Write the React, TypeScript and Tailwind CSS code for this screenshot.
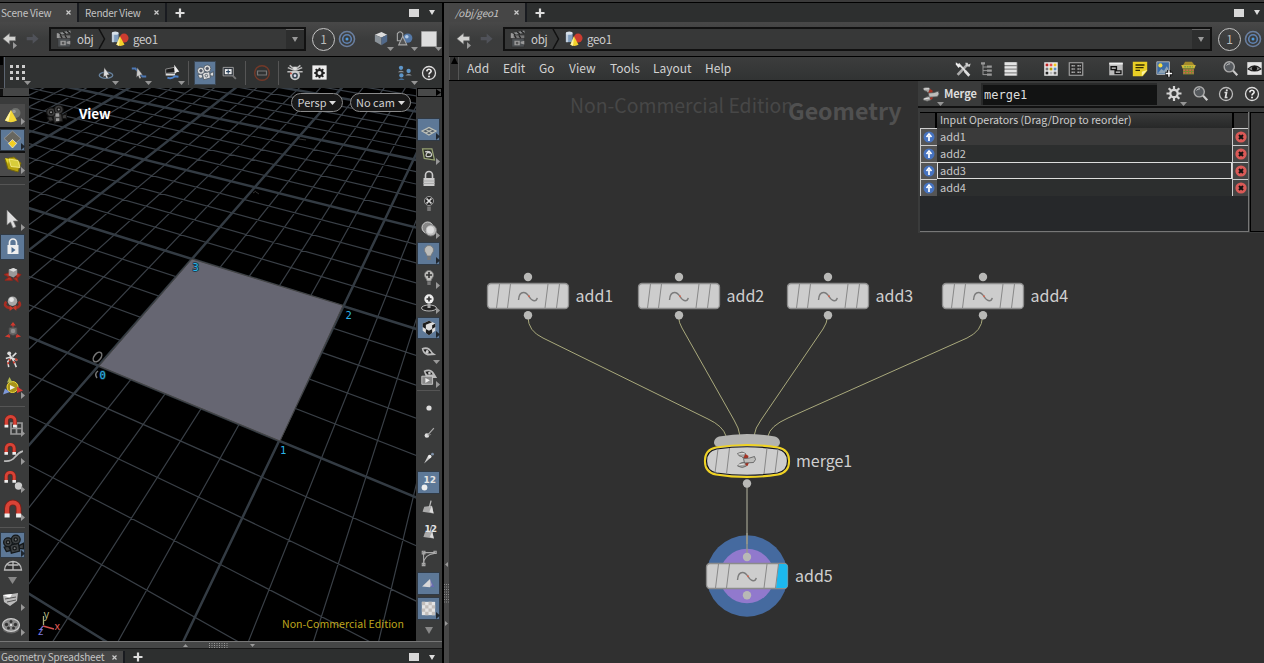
import React from 'react';

const UI = "font-['Noto_Sans_CJK_SC','Noto_Sans',sans-serif]";

/* ---------- perspective floor grid ---------- */

// Known floor points: [u, v, screen x, screen y], one unit = one major cell.
const ANCHORS = [
  [0, 0, 99, 366], [1, 0, 280, 441], [1, 1, 343, 305.5], [0, 1, 192, 259],
  [0, 2, 255.7, 186.7], [0, 3, 299.7, 135.7], [1, 2, 384.7, 220], [-1, 1, 67.3, 220],
  [-1, 2, 143.7, 159.7], [1, -0.8, 194.7, 616.7], [1.4, -0.2, 353, 518.3],
  [1.4, -0.6, 320.7, 616.7], [0.6, -1, 67.3, 617.7], [1.4, 0, 366.3, 476.7],
];

function solveProjection(): number[] {
  const m = Array.from({ length: 8 }, () => new Array(9).fill(0));
  for (const [u, v, x, y] of ANCHORS) {
    const rows = [
      [u, v, 1, 0, 0, 0, -u * x, -v * x, x],
      [0, 0, 0, u, v, 1, -u * y, -v * y, y],
    ];
    for (const r of rows)
      for (let i = 0; i < 8; i++) for (let j = 0; j < 9; j++) m[i][j] += r[i] * r[j];
  }
  for (let c = 0; c < 8; c++) {
    let p = c;
    for (let r = c + 1; r < 8; r++) if (Math.abs(m[r][c]) > Math.abs(m[p][c])) p = r;
    [m[c], m[p]] = [m[p], m[c]];
    for (let r = 0; r < 8; r++) {
      if (r === c) continue;
      const f = m[r][c] / m[c][c];
      for (let j = c; j < 9; j++) m[r][j] -= f * m[c][j];
    }
  }
  return m.map((r, i) => r[8] / r[i]);
}

const H = solveProjection();
const depth = (u: number, v: number) => H[6] * u + H[7] * v + 1;
const project = (u: number, v: number) => {
  const w = depth(u, v);
  return [(H[0] * u + H[1] * v + H[2]) / w, (H[3] * u + H[4] * v + H[5]) / w];
};

function gridLine(a: number[], b: number[]): string {
  const NEAR = 0.25;
  let p = a, q = b;
  const wp = depth(a[0], a[1]), wq = depth(b[0], b[1]);
  if (wp < NEAR && wq < NEAR) return '';
  const t = (NEAR - wp) / (wq - wp);
  const cut = [a[0] + (b[0] - a[0]) * t, a[1] + (b[1] - a[1]) * t];
  if (wp < NEAR) p = cut;
  if (wq < NEAR) q = cut;
  const [x1, y1] = project(p[0], p[1]);
  const [x2, y2] = project(q[0], q[1]);
  return `M${x1.toFixed(1)} ${y1.toFixed(1)}L${x2.toFixed(1)} ${y2.toFixed(1)}`;
}

let MINOR = '';
let MAJOR = '';
for (let i = -30; i <= 30; i++) {
  const s = gridLine([i / 5, -4], [i / 5, 6]) + gridLine([-6, i / 5], [6, i / 5]);
  if (i % 5 === 0) MAJOR += s;
  else MINOR += s;
}

/* ---------- icons ---------- */

type IconProps = { name: string; size?: string };

const magnet = (
  <>
    <path d="M4 13V8a5 5 0 0 1 10 0v5" fill="none" stroke="#7a1f18" strokeWidth="5" />
    <path d="M4 13V8a5 5 0 0 1 10 0v5" fill="none" stroke="#d84336" strokeWidth="3.6" />
    <path d="M1.800 12.500h4.400v3.500H1.800zM11.800 12.500h4.400v3.500h-4.400z" fill="#eee" />
  </>
);
const bulb = (
  <>
    <path d="M10 2.500a4.500 4.500 0 0 0-4.500 4.500c0 2.500 2.200 3.500 2.500 6h4c.3-2.500 2.500-3.500 2.500-6A4.500 4.500 0 0 0 10 2.500z" fill="#bdbdba" stroke="#777" strokeWidth=".8" />
    <path d="M8.300 13.500h3.400v3.500H8.300z" fill="#777" />
  </>
);
const camera = (
  <>
    <path d="M2 12l4-1 2 4-4 1zM15.500 10.500l4-2v5l-4-.5z" />
    <path d="M7 10l8-1.500 1 7-7.500 2z" />
    <circle cx="5.500" cy="7.500" r="4" />
    <circle cx="12.500" cy="5" r="4" />
  </>
);

const ICONS: Record<string, React.ReactNode> = {
  dots: <path d="M2 2h3v3H2zM8 2h3v3H8zM14 2h3v3h-3zM2 8h3v3H2zM8 8h3v3H8zM14 8h3v3h-3zM2 14h3v3H2zM8 14h3v3H8zM14 14h3v3h-3z" fill="#ccc" />,
  orbit: (
    <>
      <ellipse cx="10" cy="12.500" rx="7.500" ry="3.500" fill="none" stroke="#66809c" strokeWidth="1.500" />
      <path d="M8 4l6 8-3 .3 1.500 3.200-2 .8L9 13l-2 2z" fill="#ddd" stroke="#333" strokeWidth=".5" />
    </>
  ),
  snapline: (
    <>
      <path d="M2 5h4l8 9h4" stroke="#4d78b5" strokeWidth="2.200" fill="none" />
      <path d="M8 4l6 8-3 .3 1.500 3.200-2 .8L9 13l-2 2z" fill="#ccc" stroke="#333" strokeWidth=".5" />
    </>
  ),
  brush: (
    <>
      <path d="M2 6l10-2 2 6-12 1z" fill="#1c1c1c" stroke="#999" />
      <path d="M2 12.500h11" stroke="#ddd" strokeWidth="2.200" />
      <path d="M4 16q5 2 9-1.500l4 .5" fill="none" stroke="#4f83c9" strokeWidth="2.300" />
      <path d="M12 1l6 8-3 .3-2.500 2.500z" fill="#eee" />
    </>
  ),
  movie: <g fill="#dcdcdc" stroke="#4a5560" strokeWidth=".9">{camera}<circle cx="5.500" cy="7.500" r="1.400" fill="#556" /><circle cx="12.500" cy="5" r="1.400" fill="#556" /><circle cx="11.500" cy="13" r="1.500" /></g>,
  movieDark: <g fill="#3e4244" stroke="#14181a" strokeWidth="1.200">{camera}<circle cx="5.500" cy="7.500" r="1.500" fill="#777" /><circle cx="12.500" cy="5" r="1.500" fill="#777" /><circle cx="11.500" cy="13" r="1.500" fill="#777" /></g>,
  movieGrey: <g fill="#3c3c3c" stroke="#151515" strokeWidth="1">{camera}<circle cx="5.500" cy="7.500" r="1.500" fill="#888" /><circle cx="12.500" cy="5" r="1.500" fill="#888" /><path d="M9.500 8.500h3.500v3H9.500zM10 13h3v2.500h-3z" fill="#999" stroke="none" /></g>,
  zoomview: (
    <>
      <path d="M2.500 4h12v10h-12z" fill="#2c333b" stroke="#a5a5a5" />
      <path d="M4.500 6h8v6h-8z" fill="#eee" /><path d="M8.500 6.500v5M6 9h5" stroke="#27425e" strokeWidth="1.300" />
      <path d="M14 14l3.500 3.500" stroke="#777" strokeWidth="2" />
    </>
  ),
  stop: (
    <>
      <circle cx="10" cy="10" r="7.300" fill="none" stroke="#743928" strokeWidth="1.400" />
      <path d="M5.500 8h9v4h-9z" fill="none" stroke="#777" strokeWidth="1.200" />
    </>
  ),
  spider: (
    <>
      <path d="M2 4l6 2.500M4 1.500l5 4M18 4l-6 2.500M16 1.500l-5 4M1.500 8.500h6M18.500 8.500h-6" stroke="#bbb" strokeWidth="1.700" />
      <path d="M8 3h4v4H8z" fill="#ddd" />
      <circle cx="10" cy="12.500" r="5.500" fill="#ccc" /><circle cx="10" cy="13" r="3.200" fill="#394650" /><circle cx="10" cy="13" r="1.500" fill="#dde" /><circle cx="5.500" cy="10.500" r="1" fill="#c43" />
    </>
  ),
  gearbox: (
    <>
      <path d="M2.500 2.500h15v15h-15z" fill="#eee" />
      <circle cx="10" cy="10.500" r="3.200" fill="none" stroke="#222" strokeWidth="2.200" />
      <path d="M10 5v2M10 14v2M4.500 10.500h2M13.500 10.500h2M6 6.500l1.500 1.500M14 6.500L12.500 8M6 14.500L7.500 13M14 14.500L12.500 13" stroke="#222" strokeWidth="1.900" />
    </>
  ),
  people: (
    <>
      <circle cx="5" cy="3.500" r="2.700" fill="#5e96c9" /><path d="M1 9q4-3.500 8 0z" fill="#8a9096" />
      <circle cx="14.500" cy="7.500" r="2.700" fill="#5e96c9" /><path d="M10.500 13q4-3.500 8 0z" fill="#8a9096" />
      <circle cx="5.500" cy="13" r="2.700" fill="#5e96c9" /><path d="M1.500 18.500q4-3.500 8 0z" fill="#4d83b8" />
    </>
  ),
  help: (
    <>
      <circle cx="10" cy="10" r="6.500" fill="#333" stroke="#ddd" strokeWidth="1.300" />
      <path d="M7.800 8.300q.2-2 2.200-2t2.200 1.800q0 1-1.200 1.700-1 .6-1 1.600" fill="none" stroke="#eee" strokeWidth="1.600" />
      <circle cx="10" cy="13.500" r="1" fill="#eee" />
    </>
  ),
  info: (
    <>
      <circle cx="10" cy="10" r="6.500" fill="#333" stroke="#bbb" strokeWidth="1.300" />
      <path d="M8.500 8.500h2L9.500 13.500h2" fill="none" stroke="#ddd" strokeWidth="1.700" />
      <circle cx="10.800" cy="6.300" r="1.100" fill="#ddd" />
    </>
  ),
  clap: (
    <>
      <path d="M3 9h14v10H3z" fill="#4c5053" stroke="#333" />
      <path d="M2 3.500l15-3 .5 2.500-15 3z" fill="#8b8d8e" /><path d="M4 3l3 2.500M9 2l3 2.500M13.500 1l3 2.500" stroke="#222" strokeWidth="1.500" />
      <path d="M4 6h13v3H4z" fill="#777" /><path d="M6 6l2 3M11 6l2 3" stroke="#222" strokeWidth="1.300" />
      <path d="M2 4h3v5H2z" fill="#999" />
      <path d="M6 12h6v5H6zM13 13l4-1v4l-4-1z" fill="#999" /><circle cx="9" cy="14.500" r="1.500" fill="#555" />
    </>
  ),
  geo: (
    <>
      <path d="M1 3.500v10h7.500v-10z" fill="#7f9dbe" /><path d="M1 3.500v10h2.500v-10z" fill="#c0cedd" /><ellipse cx="4.700" cy="3.500" rx="3.700" ry="1.700" fill="#d6e0ea" />
      <circle cx="14.500" cy="9" r="5" fill="#cb3c30" />
      <path d="M10 7L6 16.500q4.500 2.500 9 0z" fill="#f3d22c" /><path d="M10 7L6 16.500l3 1.200z" fill="#fff3a0" />
    </>
  ),
  back: <path d="M1 9l8-6.500v4h7v5H9v4z" fill="#d2d2d0" stroke="#666" strokeWidth=".7" />,
  fwd: <path d="M16 9L9 3v4H2v4h7v4z" fill="#505259" />,
  target: (
    <g fill="none" stroke="#5f83b4" strokeWidth="1.600">
      <circle cx="10" cy="10" r="7.500" stroke="#6a7fa0" /><circle cx="10" cy="10" r="4.300" /><circle cx="10" cy="10" r="1.500" fill="#4d9be0" stroke="none" />
    </g>
  ),
  cube: (
    <>
      <path d="M3 5l7-3 6 3-6 3z" fill="#ddd" /><path d="M3 5l7 3v8l-7-4z" fill="#8a9299" /><path d="M16 5l-6 3v8l6-4z" fill="#51698a" />
    </>
  ),
  shapes: (
    <>
      <path d="M1.500 4q3-4 6 0v8h-6z" fill="#3d3f40" stroke="#aaa" strokeWidth="1.200" />
      <circle cx="13" cy="9" r="5.200" fill="#5579a8" /><circle cx="12" cy="7.500" r="2" fill="#b4cbe6" />
      <path d="M7.500 7L3 16.500h9z" fill="#555" stroke="#aaa" strokeWidth="1.200" />
    </>
  ),
  square: <path d="M2.500 2.500h15v15h-15z" fill="#ddd" stroke="#aaa" strokeWidth=".6" />,
  cone: (
    <>
      <circle cx="12.500" cy="7" r="5" fill="#6f716e" /><circle cx="11" cy="5.500" r="1.800" fill="#999" />
      <path d="M8 4L2 14.500q5.500 3.500 12 0z" fill="#f2d638" /><path d="M8 4L5.500 15.500l-3.500-1z" fill="#fff39a" />
    </>
  ),
  tile: (
    <>
      <path d="M9.500 1l8.500 7.500-8.500 7.500L1 8.500z" fill="#67665f" stroke="#999" strokeWidth=".8" />
      <path d="M9.500 9.500l4.200 4-4.200 4.500-4.200-4.500z" fill="#f3cf24" stroke="#eee" strokeWidth=".7" />
    </>
  ),
  ybox: (
    <>
      <path d="M2 4l9-2 7 6-3 9-10-3z" fill="#b7a30d" stroke="#77690a" /><path d="M6 4l9 1.500 2 7-9-1z" fill="#d8cd3a" stroke="#fff6a0" strokeWidth=".7" /><path d="M2 3l4 1-1 5z" fill="#e5d92f" />
    </>
  ),
  pointer: <path d="M4 1v15l3.500-3 2.500 6 3-1.300-2.600-5.700h4.600z" fill="#ddd" stroke="#777" strokeWidth=".7" />,
  lockSel: (
    <>
      <path d="M6.500 8V5.500a3.500 3.500 0 0 1 7 0V8" fill="none" stroke="#eee" strokeWidth="1.700" />
      <path d="M4.500 8h11v9h-11z" fill="#eee" /><path d="M8.500 10l4 3-4 3z" fill="#4a6a8e" />
    </>
  ),
  move: (
    <>
      <path d="M1 9l6-2v5zM19 9l-7-2 3 6zM2 15l5-4 3 4zM16 17l-5-4 4-1z" fill="#b53124" stroke="#8f261c" strokeWidth="1" />
      <path d="M6 4l5-2 4 2v5l-4 3-5-2z" fill="#999" /><path d="M6 4l5-2 4 2-4 2z" fill="#ddd" />
    </>
  ),
  rotate: (
    <>
      <path d="M3.500 8q-4 5 4 7M16.500 8q4 5-4 7" fill="none" stroke="#a52d22" strokeWidth="2.800" /><path d="M7 12v6l4-3zM14 11.500v6l-4-3z" fill="#c83a2b" />
      <circle cx="10" cy="7.500" r="5" fill="#a8a8a8" /><circle cx="9" cy="6" r="2.500" fill="#e6e6e6" />
    </>
  ),
  scale: (
    <>
      <path d="M10 0l3 4H7zM1 16l5-3 1 4.500zM19 16l-5-3-1 4.500z" fill="#d43c2e" /><path d="M10 3v5M5 15l4-3M15 15l-4-3" stroke="#b33" strokeWidth="2" />
      <path d="M5.500 6.500l4.500-1 4.500 1v7L10 15l-4.500-1.500z" fill="#666" stroke="#444" /><circle cx="10" cy="10" r="2.500" fill="#8d8d8d" />
    </>
  ),
  pose: (
    <>
      <circle cx="6.500" cy="3.500" r="2" fill="#ddd" />
      <path d="M7 5l2 3-4 4 1 6M9 8l6 3M9 8l3 5 2 5M9 7L3 9M14 3l-4 4" fill="none" stroke="#ddd" strokeWidth="1.600" />
      <path d="M6.500 9.500l1 2M13 9l2 2M11 12l1 2M5.500 13v2" stroke="#cc3a2b" strokeWidth="2" />
    </>
  ),
  handles: (
    <>
      <circle cx="9.500" cy="10" r="5.500" fill="#a8931a" stroke="#f3dc3a" /><path d="M6.500 0l3 5.500-5.500 0z" fill="#b3b84f" /><path d="M20 13.500l-6-4v6.500z" fill="#d63b35" /><path d="M0 17.500l2-6 5 3.500z" fill="#7d98d8" />
      <path d="M7 8l5 2.500-5 2.500z" fill="#eee" />
    </>
  ),
  magGrid: <><path d="M8 8h11v11H8zM13.500 8v11M8 13.500h11" fill="none" stroke="#999" strokeWidth="1.700" /><g transform="translate(0 -1) scale(.85)">{magnet}</g></>,
  magCurve: <><path d="M1 18q7 1 11-4t8-6" fill="none" stroke="#bbb" strokeWidth="1.700" /><g transform="translate(0 -1) scale(.8)">{magnet}</g></>,
  magPoint: <><circle cx="15.500" cy="15" r="3.700" fill="#ccc" /><g transform="translate(0 -1) scale(.8)">{magnet}</g></>,
  magMulti: <g transform="translate(-.5 0) scale(1.15)">{magnet}</g>,
  arc: <path d="M1.500 14a8.500 8.500 0 0 1 17 0zM10 5v9M4.500 9h11" fill="#303030" stroke="#bbb" strokeWidth="1.300" />,
  sheets: <><path d="M2 5l9-1 6-1-1 8-7 5-6-4z" fill="#bbb" /><path d="M2 5l9-1-2 4z" fill="#fff" /><path d="M4 9l11-2M6 12l9-2" stroke="#555" /></>,
  reel: (
    <>
      <path d="M1.500 10q8 9 17 0l-1 5q-7 5-15 0z" fill="#666" /><ellipse cx="10" cy="9" rx="8.500" ry="6.300" fill="#888" stroke="#ccc" strokeWidth="1.200" />
      <circle cx="5.500" cy="8.500" r="1.700" fill="#333" /><circle cx="10" cy="5.500" r="1.500" fill="#333" /><circle cx="14.500" cy="8.500" r="1.700" fill="#333" /><circle cx="7.500" cy="12" r="1.500" fill="#333" /><circle cx="12.500" cy="12" r="1.500" fill="#333" /><circle cx="10" cy="9" r="1.100" fill="#eee" />
    </>
  ),
  plane: <path d="M3 12l7-3.500 7 3.500-7 4zM6.500 10.300l7 4M13.500 10.300l-7 4" fill="#55606a" stroke="#bdc0b8" strokeWidth="1.200" />,
  wplane: <><path d="M3 3.500l11 0 3 13-12-2z" fill="#2e3128" stroke="#96a273" strokeWidth="1.500" /><path d="M6 7q5-2 7 1.500t-2.500 4-3-3 4-1" fill="none" stroke="#ccc" strokeWidth="1.500" /></>,
  padlock: <><path d="M6.500 9V6a3.500 3.500 0 0 1 7 0v3" fill="none" stroke="#ccc" strokeWidth="1.600" /><path d="M4.500 9h11v8h-11z" fill="#ccc" /><path d="M4.500 12h11M4.500 14.500h11" stroke="#aaa" /></>,
  bulbX: <><circle cx="10" cy="7" r="4.500" fill="#222" stroke="#999" /><path d="M7.500 4.500l5 5M12.500 4.500l-5 5" stroke="#ddd" strokeWidth="1.700" /><path d="M8.200 12.500h3.600V17H8.200z" fill="#777" /></>,
  spheres: <><circle cx="8.500" cy="8.500" r="6.300" fill="#888" stroke="#ddd" /><circle cx="12" cy="11.500" r="6.300" fill="#bbb" stroke="#777" /><circle cx="11.500" cy="11" r="4" fill="#ddd" /></>,
  bulb,
  bulbPlus: <>{bulb}<path d="M10 4v6M7 7h6" stroke="#333" strokeWidth="1.600" /></>,
  bulbDisk: <><ellipse cx="10" cy="15" rx="7.500" ry="3" fill="#222" stroke="#bbb" /><circle cx="10" cy="6" r="4.700" fill="#eee" /><path d="M10 3.500v5M7.500 6h5" stroke="#333" strokeWidth="1.600" /><path d="M8.500 10.500h3V15h-3z" fill="#aaa" /></>,
  checker: (
    <>
      <path d="M3 5l7-3 7 3v8l-7 5-7-5z" fill="#ddd" /><path d="M3 5l3.500-1.500L10 5 6.500 6.500zM10 2l3.500 1.500L10 5 6.500 3.500zM3 9l3.500 2V6.500L3 5zM6.500 11l3.500 2v5l-3.500-2.500zM13.500 7L17 5v4l-3.500 2zM10 13l3.500-2v4.500L10 18z" fill="#1c1c1c" />
    </>
  ),
  eye: <><path d="M2 5q8-4 13 5l4 3-10 .5Q3 12 2 5z" fill="#bbb" /><path d="M4 6.500q6-2 9.500 4.500-7 1-9.500-4.500z" fill="#1c1c1c" /><circle cx="8.500" cy="9" r="1.800" fill="#ccc" /></>,
  eyeBox: <><path d="M4 2q8-4 12 3l3 5H7z" fill="#bbb" /><path d="M6 3q6-2 8 3H8z" fill="#222" /><circle cx="10.500" cy="4.500" r="1.500" fill="#ccc" /><path d="M2 8h12v9H2z" fill="#888" stroke="#ccc" /><path d="M6 10l5 2.500-5 3z" fill="#eee" /></>,
  point: <circle cx="10" cy="10" r="2.600" fill="#ddd" />,
  normal: <><path d="M8 13l9-10" stroke="#aaa" strokeWidth="1.700" /><circle cx="7" cy="13.500" r="3.300" fill="#ddd" /><path d="M8 13l5-1" stroke="#777" strokeWidth="1.500" /></>,
  trail: <><path d="M3 18l5-10 3.500 2.500z" fill="#ccc" /><circle cx="11" cy="8" r="2.600" fill="#eee" /><circle cx="15" cy="4.500" r="2" fill="#7d8fa6" /></>,
  prim: <><path d="M5 9l9-1 2 9-13-2z" fill="#aaa" /><path d="M14 8l2 9-5-2z" fill="#ddd" /><path d="M11 10l2-8" stroke="#bbb" strokeWidth="1.500" /></>,
  vcurve: <path d="M4 18V4h13M4 16Q5 6 16 5M2.500 2.500h3v3h-3zM15.500 2.500h2.500v2.500h-2.500zM2.500 16h3v2.500h-3z" fill="none" stroke="#aaa" strokeWidth="1.200" />,
  fan: <><path d="M1.500 14L12 4v11z" fill="#d8d8d8" /><path d="M12 4l6 11-6-1z" fill="#6a6ab5" /><path d="M12 4v11l2.500-3z" fill="#aab" /></>,
  alpha: <><path d="M3 3h14v14H3z" fill="#e4e4e4" /><path d="M3 3h3.500v3.500H3zM10 3h3.500v3.500H10zM6.500 6.500H10V10H6.500zM13.500 6.500H17V10h-3.500zM3 10h3.500v3.500H3zM10 10h3.500v3.500H10zM6.500 13.500H10V17H6.500zM13.500 13.500H17V17h-3.500z" fill="#c2bebb" /></>,
  tools: (
    <>
      <path d="M4 16.500L14 6" stroke="#aaa" strokeWidth="3" /><path d="M12.500 3l1 4 4 .5 1-3.500-2.500 1-1-2z" fill="#ccc" />
      <path d="M5 4l11 12" stroke="#ddd" strokeWidth="2.200" /><path d="M2 2.500l5.500 4-2.500 2.500-3-4z" fill="#eee" /><path d="M12 12l5 5.500" stroke="#ddd" strokeWidth="3" />
    </>
  ),
  tree: <><path d="M5 3v14.500M5 7.500h5M5 12h5M5 17h5" stroke="#999" strokeWidth="1.200" fill="none" /><path d="M2.500 1.500h5v3h-5zM10 5.500h6v3h-6zM10 10.500h6v3h-6zM10 15.500h6v3h-6z" fill="#999" /></>,
  list: <><path d="M2 1.500h16v17H2z" fill="#888" /><path d="M2 1.500h15v3.500H2zM2 6.500h15v3H2zM2 11h15v3H2zM2 15.500h15v2.500H2z" fill="#e4e4e4" /></>,
  colors: (
    <>
      <path d="M2.500 2.500h15v15h-15z" fill="#eee" />
      <path d="M4 4h3v3H4z" fill="#bd2121" /><path d="M8.500 4h3v3h-3z" fill="#e8504e" /><path d="M13 4h3v3h-3z" fill="#f4c620" />
      <path d="M4 8.500h3v3H4z" fill="#777" /><path d="M8.500 8.500h3v3h-3z" fill="#b89c00" /><path d="M13 8.500h3v3h-3z" fill="#5d8dc4" />
      <path d="M4 13h3v3H4z" fill="#222" /><path d="M8.500 13h3v3h-3z" fill="#bbb" /><path d="M13 13h3v3h-3z" fill="#666" />
    </>
  ),
  table: <><path d="M2.500 3h15v14h-15z" fill="#2a2a2a" stroke="#aaa" strokeWidth="1.200" /><path d="M5 6.500h4M11.500 6.500h4M5 10h4M11.500 10h4M5 13.500h4M11.500 13.500h4" stroke="#aaa" strokeWidth="1.700" strokeDasharray="2.500 .5" /></>,
  boxes: <><path d="M2.500 3h15v14h-15z" fill="#bbb" /><path d="M2.500 3h15v2h-15z" fill="#eee" /><path d="M4.500 7.500h6v3h-6zM9 12h6.500v3H9z" fill="#ddd" stroke="#111" strokeWidth="1.500" /></>,
  note: <><path d="M2 2h16v10l-5 6H2z" fill="#e9cf25" /><path d="M18 11l-6 7v-5z" fill="#fff4a0" /><path d="M5 5.500h10M5 8.500h9M5 11.500h5" stroke="#332d00" strokeWidth="1.500" /></>,
  picture: (
    <>
      <path d="M2 2h14v14H2z" fill="#3c6ca6" stroke="#bbb" /><circle cx="6" cy="6" r="2.300" fill="#f6dc45" /><path d="M3 15l4-5 3 2 3-5 2 3v5z" fill="#8fa3b2" />
      <path d="M15.500 11v8M11.500 15h8" stroke="#111" strokeWidth="4" /><path d="M15.500 11.500v7M12 15h7" stroke="#fff" strokeWidth="1.600" />
    </>
  ),
  basket: <><path d="M3 7l3-5h8l4 5z" fill="#a38a2a" /><path d="M1.500 6h17l-1.500 4H3z" fill="#cdb73a" /><path d="M3.500 10h13v7h-13z" fill="#7c8a34" /><path d="M4 12h12M4 15h12" stroke="#d8604a" strokeWidth="1.600" strokeDasharray="2 1.500" /><path d="M5 8h10" stroke="#79a344" strokeWidth="1.700" strokeDasharray="2 1" /></>,
  search: <><circle cx="8.500" cy="8" r="6" fill="#55595d" stroke="#aaa" strokeWidth="1.700" /><path d="M5.500 6.500q1.500-2.500 4-2" stroke="#ddd" fill="none" /><path d="M13 12.500l5 5.500" stroke="#ccc" strokeWidth="2.600" /></>,
  eyeCard: <><path d="M1.500 2.500h17v15h-17z" fill="#e4e4e4" /><path d="M2.500 10.500q7.500-7 15 0-7.500 5-15 0z" fill="#888" stroke="#222" strokeWidth="1.300" /><circle cx="10" cy="10" r="3" fill="#111" /></>,
  gear: <g stroke="#d4d4d4" fill="none"><circle cx="10" cy="9.500" r="3.700" strokeWidth="2.300" /><path d="M10 2v3.500M10 13.500V17M2.500 9.500H6M14 9.500h3.500M4.700 4.200l2.300 2.300M15.300 4.200L13 6.500M4.700 14.800L7 12.500M15.300 14.800L13 12.500" strokeWidth="2.200" /></g>,
  merge: (
    <>
      <path d="M1 4q5-3 8 0l-1 4q-2 1-3-1Q2 7 1 4zM1 16.500q2-4 8-4l1 4q-4 3-9 0z" fill="#a3a3a1" stroke="#555" strokeWidth=".7" />
      <path d="M9 4.500l3 2-1 3.500-4-1.500zM9 15.500l0-3.500 3.500 1-1.500 3.500z" fill="#a83223" />
      <path d="M7 9l6-.5 5-1.500 1 3-2 3-9 .5z" fill="#bdbdbb" stroke="#555" strokeWidth=".8" /><path d="M2 4.500l6-.3M2 15.500l6-1" stroke="#e4e4e4" strokeWidth="1.200" />
    </>
  ),
};

function Icon({ name, size = 'size-5' }: IconProps) {
  return <svg viewBox="0 0 20 20" className={`${size} shrink-0`}>{ICONS[name]}</svg>;
}

/* ---------- shared bits ---------- */

function Tool({ name, className = '', menu = false, size }: { name: string; className?: string; menu?: boolean; size?: string }) {
  return (
    <div className={`relative flex h-6 w-6 shrink-0 items-center justify-center ${className}`}>
      <Icon name={name} size={size} />
      {menu && <svg viewBox="0 0 7 4" className="absolute -right-px bottom-0 h-[4px] w-[7px]"><path d="M0 0h7L3.500 4z" fill="#959595" /></svg>}
    </div>
  );
}

function SideTool({ name, fly = false, down = false, on = false, className = 'h-7', size = 'size-5', label }: { name?: string; fly?: boolean; down?: boolean; on?: boolean; className?: string; size?: string; label?: string }) {
  return (
    <div className={`relative flex w-full items-center justify-center ${className}`}>
      <div className={`relative flex items-center justify-center ${on ? 'h-[calc(100%-2px)] w-full border border-[#303a45] bg-[#5d7897]' : 'h-full w-full'}`}>
        {name && <Icon name={name} size={size} />}
        {label && <span className="absolute top-[3px] right-[3px] font-['DejaVu_Sans',sans-serif] text-[9px] leading-[10px] font-bold text-[#e4e4e4]">{label}</span>}
      </div>
      {fly && <svg viewBox="0 0 4 7" className="absolute right-0 bottom-[2px] h-[7px] w-[4px]"><path d="M0 0v7l4-3.500z" fill={on ? '#1f262e' : '#999'} /></svg>}
      {down && <svg viewBox="0 0 7 4" className="absolute right-0 bottom-[1px] h-[4px] w-[7px]"><path d="M0 0h7L3.500 4z" fill="#999" /></svg>}
    </div>
  );
}

function Tab({ text, active = false, className }: { text: string; active?: boolean; className: string }) {
  return (
    <div className={`flex h-full items-center justify-between border-r-2 border-[#191b20] pr-[6px] pl-[1px] text-[10px] leading-[14px] tracking-[-0.2px] text-[#c4c4c4] ${active ? 'bg-[#464646]' : 'bg-[#313333]'} ${className}`}>
      <span className="whitespace-nowrap">{text}</span>
      <svg viewBox="0 0 5 5" className="size-[5px]"><path d="M.5.5l4 4M4.500.5l-4 4" stroke="#ccc" strokeWidth="1.200" /></svg>
    </div>
  );
}

function Plus({ className = '' }: { className?: string }) {
  return <svg viewBox="0 0 10 10" className={`size-[10px] ${className}`}><path d="M5 .5v9M.5 5h9" stroke="#ddd" strokeWidth="2.200" /></svg>;
}

function PaneButtons({ className = 'pr-[7px]' }: { className?: string }) {
  return (
    <div className={`ml-auto flex items-center gap-[10px] ${className}`}>
      <div className="h-2 w-[10px] bg-[#d8d8d8]" />
      <svg viewBox="0 0 6 5" className="h-[5px] w-[6px]"><path d="M0 0h6L3 5z" fill="#ddd" /></svg>
    </div>
  );
}

function PathRow({ boxClass, pad, children }: { boxClass: string; pad: string; children?: React.ReactNode }) {
  return (
    <div className={`flex h-[34px] items-center bg-gradient-to-b from-[#484848] via-[#3b3c3c] to-[#3c3c3c] ${pad}`}>
      <div className="relative flex h-6 w-[22px] items-center">
        <Icon name="back" size="size-[17px]" />
        <svg viewBox="0 0 4 7" className="absolute top-[15px] left-[11px] h-[7px] w-[4px]"><path d="M0 0v7l4-3.500z" fill="#999" /></svg>
      </div>
      <div className="flex h-6 w-[25px] items-center pl-[1px]"><Icon name="fwd" size="size-[17px]" /></div>
      <div className={`flex h-6 items-center border-2 border-[#111] bg-[#373838] text-[11.500px] leading-[16px] tracking-[-0.3px] text-[#cfcfcf] ${boxClass}`}>
        <div className="flex h-full items-center pl-1"><Icon name="clap" size="size-[18px]" /><span className="-mt-px ml-[4px] w-[21px]">obj</span></div>
        <svg viewBox="0 0 8 20" className="h-5 w-2"><path d="M1 0l5.500 10L1 20" fill="none" stroke="#111" strokeWidth="1.500" /></svg>
        <div className="flex items-center pl-[5px]"><Icon name="geo" size="size-[18px]" /><span className="-mt-px ml-[4px]">geo1</span></div>
        <div className="ml-auto flex h-full w-[18px] items-center justify-center border-t border-[#666] bg-[#2d2e2e]">
          <svg viewBox="0 0 6 5" className="h-[5px] w-[6px]"><path d="M0 0h6L3 5z" fill="#999" /></svg>
        </div>
      </div>
      <div className="ml-[6px] flex size-[23px] items-center justify-center rounded-full border-[1.500px] border-[#c4c4c4] pb-px text-[12px] leading-none text-[#bbb]">1</div>
      <div className="ml-[2px]"><Icon name="target" size="size-[20px]" /></div>
      {children}
    </div>
  );
}

/* ---------- scene view ---------- */

function Pill({ text, className }: { text: string; className: string }) {
  return (
    <div className={`flex h-[19px] items-center justify-center gap-[3px] rounded-full border border-[#8a8a8a] bg-[#191919] pb-[2px] text-[11px] leading-[14px] text-[#d0d0d0] ${className}`}>
      {text}
      <svg viewBox="0 0 7 4" className="mt-[3px] h-[4px] w-[7px]"><path d="M0 0h7L3.500 4z" fill="#ddd" /></svg>
    </div>
  );
}

function Viewport() {
  return (
    <div className="relative h-full w-[387px] overflow-hidden bg-black">
      <svg viewBox="29 88 387 553" className="block h-[553px] w-[387px]">
        <path d={MINOR} stroke="#393f46" strokeWidth="1.200" />
        <path d={MAJOR} stroke="#333b43" strokeWidth="2.500" />
        <path d="M99 366L280 441 343 305.500 192 259z" fill="#666672" stroke="#444" strokeWidth="1" />
        <path d="M253 193l3-2M256 192l3 2M299 139l7 1" stroke="#333" />
        <ellipse cx="97.500" cy="357" rx="3.300" ry="5.500" transform="rotate(38 97.500 357)" fill="none" stroke="#777" strokeWidth="1.500" />
        <path d="M98 371q-4 3-1 7" stroke="#777" fill="none" strokeWidth="1.500" />
        <g className="font-['DejaVu_Sans_Mono',monospace] text-[10.500px]" fill="#2bb4e8" stroke="#12313f" strokeWidth="1.500" paintOrder="stroke">
          <text x="99.500" y="379">0</text>
          <text x="192.500" y="271">3</text>
          <text x="345.500" y="319" stroke="none">2</text>
          <text x="280" y="454" stroke="none">1</text>
        </g>
        <path d="M43.500 616v9" stroke="#a9ad78" strokeWidth="1.300" />
        <path d="M43 626l11 3" stroke="#d4504c" strokeWidth="1.300" />
        <path d="M43 626l-3 4" stroke="#6868c8" strokeWidth="1.300" />
        <g className="font-['Noto_Sans_CJK_SC',sans-serif] text-[11px]">
          <text x="43.500" y="618" fill="#b2b784">y</text>
          <text x="54.500" y="630" fill="#e05b55">x</text>
          <text x="38" y="635" fill="#7a7ae0">z</text>
        </g>
      </svg>
      <div className="absolute top-[16px] left-[16px]"><Icon name="movieGrey" size="size-[22px]" /></div>
      <div className="absolute top-[16px] left-[50px] text-[13.500px] leading-[18px] font-bold tracking-[-0.1px] text-white">View</div>
      <div className="absolute top-[5px] left-[262px] flex gap-[7px]">
        <Pill text="Persp" className="w-[52px]" />
        <Pill text="No cam" className="w-[61px]" />
      </div>
      <div className="absolute bottom-[10px] left-[253px] text-[10.600px] leading-[14px] whitespace-nowrap text-[#bfa51c]">Non-Commercial Edition</div>
    </div>
  );
}

const VSep = ({ className }: { className: string }) => <div className={`h-6 w-px bg-[#555] ${className}`} />;
const HSep = () => <div className="h-px w-full shrink-0 bg-[#555]" />;
const Spacer = ({ className }: { className: string }) => <div className={`flex w-full shrink-0 items-center ${className}`}><HSep /></div>;

function LeftBar() {
  return (
    <div className="flex h-full w-[29px] flex-col bg-[#3a3b3b] pr-[4px]">
      <div className="flex h-[9px] w-[29px] items-center border-b border-black bg-[#454646]"><div className="h-[7px] w-[3px] bg-[#111]" /></div>
      <div className="mt-[7px] flex flex-col gap-px bg-[#111] pb-px">
        <SideTool name="cone" fly className="h-[23px] bg-[#4a4a4a]" />
        <SideTool name="tile" fly on className="h-[24px]" />
        <SideTool name="ybox" fly className="h-[23px] bg-[#4a4a4a]" />
      </div>
      <Spacer className="h-[14px]" />
      <div className="h-[14px] shrink-0" />
      <SideTool name="pointer" fly />
      <SideTool name="lockSel" on />
      <SideTool name="move" size="size-[19px]" />
      <SideTool name="rotate" size="size-[19px]" />
      <SideTool name="scale" size="size-[18px]" />
      <SideTool name="pose" size="size-[19px]" />
      <SideTool name="handles" fly />
      <Spacer className="h-[10px]" />
      <SideTool name="magGrid" fly />
      <SideTool name="magCurve" fly />
      <SideTool name="magPoint" fly />
      <SideTool name="magMulti" fly />
      <Spacer className="h-[8px]" />
      <SideTool name="movieDark" fly on size="size-[22px]" />
      <SideTool name="arc" className="h-[16px] overflow-hidden pb-[2px]" />
      <div className="flex h-[11px] shrink-0 items-center justify-center"><svg viewBox="0 0 9 7" className="h-[7px] w-[9px]"><path d="M0 0h9L4.500 7z" fill="#888" /></svg></div>
      <SideTool name="sheets" fly className="h-[27px] pr-[4px]" />
      <SideTool name="reel" fly className="h-[25px] pr-[3px]" />
    </div>
  );
}

function RightBar() {
  return (
    <div className="flex h-full w-[26px] flex-col bg-[#3a3b3b] pr-[2px] pl-[1px]">
      <div className="flex h-[9px] w-[25px] shrink-0 items-center justify-end border border-black bg-[#484949]"><svg viewBox="0 0 5 7" className="h-[7px] w-[5px]"><path d="M0 0v7l5-3.500z" fill="#000" /></svg></div>
      <div className="mt-[20px] flex h-[273px] shrink-0 flex-col">
        <SideTool name="plane" fly on className="min-h-0 flex-1" />
        <SideTool name="wplane" fly className="min-h-0 flex-1" size="size-[17px]" />
        <SideTool name="padlock" className="min-h-0 flex-1" />
        <SideTool name="bulbX" className="min-h-0 flex-1" />
        <SideTool name="spheres" fly className="min-h-0 flex-1" size="size-[18px]" />
        <SideTool name="bulb" fly on className="min-h-0 flex-1" />
        <SideTool name="bulbPlus" fly className="min-h-0 flex-1" />
        <SideTool name="bulbDisk" fly className="min-h-0 flex-1" />
        <SideTool name="checker" fly on className="min-h-0 flex-1" size="size-[18px]" />
        <SideTool name="eye" down className="min-h-0 flex-1" size="size-[17px]" />
        <SideTool name="eyeBox" fly className="min-h-0 flex-1" size="size-[18px]" />
      </div>
      <HSep />
      <div className="mt-[4px] flex h-[226px] shrink-0 flex-col">
        <SideTool name="point" className="min-h-0 flex-1" />
        <SideTool name="normal" className="min-h-0 flex-1" size="size-[14px]" />
        <SideTool name="trail" className="min-h-0 flex-1" size="size-[14px]" />
        <div className="relative flex min-h-0 w-full flex-1 items-center justify-center">
          <SideTool on className="h-full" label="12" />
          <svg viewBox="0 0 8 8" className="absolute bottom-[4px] left-[4px] size-[7px]"><circle cx="4" cy="4" r="3.300" fill="#eee" /></svg>
        </div>
        <SideTool name="prim" className="min-h-0 flex-1" size="size-[17px]" />
        <SideTool name="prim" className="min-h-0 flex-1" size="size-[16px]" label="12" />
        <SideTool name="vcurve" className="min-h-0 flex-1" size="size-[18px]" />
        <SideTool name="fan" on className="min-h-0 flex-1" size="size-[15px]" />
        <SideTool name="alpha" fly on className="min-h-0 flex-1" size="size-[19px]" />
      </div>
      <div className="flex h-[19px] items-center justify-center"><svg viewBox="0 0 8 7" className="h-[7px] w-[8px]"><path d="M0 0h8L4 7z" fill="#888" /></svg></div>
    </div>
  );
}

function SceneView() {
  return (
    <div className="flex h-full w-[442px] flex-col">
      <div className="flex h-[19px] bg-[#2d2f2f]">
        <Tab text="Scene View" active className="w-[79px]" />
        <Tab text="Render View" className="w-[88px] pl-[6px]" />
        <div className="flex items-center"><Plus className="ml-[8px]" /></div>
        <PaneButtons />
      </div>
      <PathRow boxClass="w-[257px]" pad="pl-[2px]">
        <Tool name="cube" menu className="ml-[12px]" size="size-[19px]" />
        <Tool name="shapes" menu className="" size="size-[18px]" />
        <Tool name="square" menu className="" size="size-[20px]" />
      </PathRow>
      <div className="flex h-[32px] items-center border-t border-black bg-[#303232]">
        <div className="h-full w-[5px] border-r border-[#5c6470] bg-[#222]"><div className="h-2 w-[3px] bg-black" /></div>
        <Tool name="dots" menu className="ml-[1px]" />
        <Tool name="orbit" menu className="ml-[64px]" size="size-[18px]" />
        <Tool name="snapline" menu className="ml-[9px]" size="size-[18px]" />
        <Tool name="brush" menu className="ml-[9px]" size="size-[17px]" />
        <VSep className="ml-[4px]" />
        <div className="ml-[5px] flex h-6 w-[22px] items-center justify-center border border-[#3a4653] bg-[#5d7897]"><Icon name="movie" size="size-[18px]" /></div>
        <Tool name="zoomview" className="ml-[1px]" size="size-[17px]" />
        <VSep className="ml-[4px]" />
        <Tool name="stop" className="ml-[4px]" />
        <VSep className="ml-[4px]" />
        <Tool name="spider" className="ml-[4px]" size="size-[18px]" />
        <Tool name="gearbox" size="size-[19px]" />
        <Tool name="people" menu className="ml-[62px]" size="size-[16px]" />
        <Tool name="help" />
      </div>
      <div className="flex h-[553px]">
        <LeftBar />
        <Viewport />
        <RightBar />
      </div>
      <div className="flex h-[7px] items-center justify-center gap-[21px] border-t border-[#777] bg-[#454646] pr-[4px]">
        <svg viewBox="0 0 5 3" className="h-[3px] w-[5px]"><path d="M0 3h5L2.500 0z" fill="#999" /></svg>
        <svg viewBox="0 0 20 5" className="h-[5px] w-[20px]"><path d="M0 .5h20M0 2.500h20M0 4.500h20" stroke="#999" strokeDasharray="1 1.500" /></svg>
        <svg viewBox="0 0 5 3" className="h-[3px] w-[5px]"><path d="M0 0h5L2.500 3z" fill="#999" /></svg>
      </div>
      <div className="flex h-[15px] items-center border-t border-[#181818] bg-[#2d2f2f] pt-[2px]">
        <Tab text="Geometry Spreadsheet" active className="w-[125px]" />
        <Plus className="ml-[8px]" />
        <PaneButtons />
      </div>
    </div>
  );
}

/* ---------- network editor ---------- */

const squiggle = (
  <>
    <path d="M31.500 17Q32 9.500 36.500 9.500q3 0 5.500 4t5 4.300q2.500.3 3.300-3" fill="none" stroke="#7b7b7b" strokeWidth="1.400" />
    <circle cx="42" cy="13.300" r="1" fill="#d06a55" />
  </>
);

function AddNode({ place, label, display = false }: { place: string; label: string; display?: boolean }) {
  return (
    <div className={`absolute flex items-center ${place}`}>
      <svg viewBox="0 -16 82 58" className="h-[58px] w-[82px] overflow-visible">
        {display && <><circle cx="41" cy="13" r="40.700" fill="#456a9f" /><circle cx="41" cy="13" r="27.300" fill="#9179cd" /></>}
        {display && <path d="M41-30v24" stroke="#999989" strokeWidth="1.300" />}
        <rect x=".5" y=".5" width="81" height="25" rx="3.500" fill="#cdcdcd" stroke="#8b8b8b" strokeWidth="1.300" />
        {display && <path d="M72.500 1H79q2.500 0 2.500 3v18q0 3-2.500 3h-9z" fill="#1cb8ee" />}
        <path d="M12.500 1L9.500 25M23.500 1l-3 24M61 1l-3 24M72.500 1l-3 24" stroke="#888" strokeWidth="1" />
        {squiggle}
        <circle cx="41" cy="-6" r="4.200" fill="#b8b8b6" />
        <circle cx="41" cy="32.300" r="4.200" fill="#b8b8b6" />
      </svg>
      <span className="-mt-[2px] ml-[7px] text-[16px] leading-[20px] text-[#cfcfcf]">{label}</span>
    </div>
  );
}

function ListRow({ label, selected = false, shade }: { label: string; selected?: boolean; shade: string }) {
  return (
    <div className="flex h-[17px] text-[11px]">
      <div className="flex w-[17px] items-center justify-center border-t border-l border-[#ccc] bg-[#555]">
        <svg viewBox="0 0 12 12" className="size-[12px]"><circle cx="6" cy="6" r="5.500" fill="#4673c0" /><path d="M6 10V5M3.500 6L6 3l2.500 3" fill="none" stroke="#fff" strokeWidth="1.700" /></svg>
      </div>
      <div className={`flex flex-1 items-center pl-[2px] leading-none text-[#c8c8c8] ${selected ? 'border border-[#ddd]' : 'border border-transparent'} ${shade}`}>{label}</div>
      <div className="flex w-[16px] items-center justify-center border-t border-l border-[#ccc] bg-[#444]">
        <svg viewBox="0 0 12 12" className="size-[12px]"><circle cx="6" cy="6" r="5.600" fill="#da5a57" /><path d="M4 4l4 4M8 4L4 8" stroke="#111" strokeWidth="2" /></svg>
      </div>
    </div>
  );
}

function ParameterPanel() {
  return (
    <div className="absolute top-0 right-0 h-[152px] w-[346px] bg-[#3a3b3b]">
      <div className="flex h-[27px] items-center border-b-2 border-[#111]">
        <Tool name="merge" menu className="ml-[1px]" size="size-[18px]" />
        <span className="ml-px w-[37px] text-[11px] leading-none font-bold tracking-[-0.1px] whitespace-nowrap text-[#ddd]">Merge</span>
        <div className="flex h-[22px] w-[176px] items-center border-t-2 border-l-2 border-[#292a2a] bg-[#121313] pl-[1px] font-['DejaVu_Sans_Mono',monospace] text-[12px] leading-none text-[#ddd]">merge1</div>
        <Tool name="gear" menu className="ml-[5px]" />
        <Tool name="search" className="ml-[2px]" size="size-[17px]" />
        <Tool name="info" className="ml-[2px]" />
        <Tool name="help" className="ml-[2px]" />
      </div>
      <div className="flex h-[125px] pt-[4px] pl-[2px]">
        <div className="h-[120px] w-[329px] border-r border-b border-[#777] bg-[#26282a]">
          <div className="flex h-[16px] gap-[2px] border-t border-black bg-black text-[10.600px]">
            <div className="w-[15px] bg-[#333]" />
            <div className="flex-1 bg-gradient-to-b from-[#393a3a] to-[#272828] pl-[3px] leading-[13px] text-[#ccc]">Input Operators (Drag/Drop to reorder)</div>
            <div className="w-[14px] bg-[#333]" />
          </div>
          <ListRow label="add1" shade="bg-[#3a3a3a]" />
          <ListRow label="add2" shade="bg-[#2c2e2e]" />
          <ListRow label="add3" selected shade="bg-[#323335]" />
          <ListRow label="add4" shade="bg-[#2c2e2e]" />
        </div>
        <div className="ml-px h-[120px] w-[14px] border border-r-0 border-black bg-[#333]" />
      </div>
    </div>
  );
}

function NetworkCanvas() {
  return (
    <div className="relative h-[582px] overflow-hidden bg-[#303030]">
      <div className="absolute top-[12px] left-[121px] text-[19.400px] leading-[24px] whitespace-nowrap text-[#474747]">Non-Commercial Edition</div>
      <div className="absolute top-[13px] left-[339px] text-[23.200px] leading-[32px] font-bold text-[#505050]">Geometry</div>
      <svg viewBox="449 81 815 582" className="absolute inset-0 h-[582px] w-[815px]">
        <g fill="none" stroke="#a9a97c" strokeWidth="1">
          <path d="M528 317Q528 331 543 338L708 419Q723 426 726 436" />
          <path d="M678.500 317Q679 323 682 328L734 420Q739 428 740 436" />
          <path d="M827.500 317Q827 323 823 329L761 420Q755 428 754 436" />
          <path d="M982.500 317Q982 331 967 338L788 418Q770 426 768 436" />
        </g>
      </svg>
      <AddNode place="top-[186px] left-[37.500px]" label="add1" />
      <AddNode place="top-[186px] left-[188.500px]" label="add2" />
      <AddNode place="top-[186px] left-[337.500px]" label="add3" />
      <AddNode place="top-[186px] left-[492.500px]" label="add4" />
      <AddNode place="top-[466px] left-[257px]" label="add5" display />
      <svg viewBox="700 430 94 130" className="absolute top-[349px] left-[251px] h-[130px] w-[94px]">
        <path d="M747 484v60" stroke="#999989" strokeWidth="1.300" />
        <path d="M714 443q0-5 5-6.500 28-5 56 0 5 1.500 5 6.500-1 4-5 4h-56q-4 0-5-4z" fill="#b3b3b1" />
        <path d="M716 447.500q31-5 62 0 11 2 11 13.500t-11 13.500q-31 5-62 0-11-2-11-13.500t11-13.500z" fill="#cdcdcd" stroke="#f0d324" strokeWidth="2.200" />
        <path d="M716.500 449q30.500-4.500 61 0 10 2 10 12t-10 12q-30.500 4.500-61 0-10-2-10-12t10-12z" fill="none" stroke="#151515" strokeWidth="1.200" />
        <path d="M718 449l-3 24M729.500 448l-3 26M767 448l-3 26M778 449l-3 24" stroke="#888" />
        <g transform="translate(736.500 449.500)">{ICONS.merge}</g>
        <circle cx="747" cy="483.500" r="4.200" fill="#b8b8b6" />
      </svg>
      <div className="absolute top-[369px] left-[347px] text-[16px] leading-[20px] text-[#cfcfcf]">merge1</div>
      <ParameterPanel />
    </div>
  );
}

function NetworkEditor() {
  return (
    <div className="flex h-full w-[815px] flex-col">
      <div className="flex h-[19px] bg-[#2d2f2f]">
        <Tab text="/obj/geo1" active className="w-[78px] pl-[6px] italic" />
        <div className="flex items-center"><Plus className="ml-[8px]" /></div>
        <PaneButtons className="pr-[4px]" />
      </div>
      <PathRow boxClass="w-[709px]" pad="pl-[7px]" />
      <div className="flex h-[25px] items-center border-y border-black bg-gradient-to-b from-[#3c3d3d] to-[#313333] text-[12px] leading-none text-[#d2d2d2]">
        <div className="h-full w-[10px] border-x border-[#555] bg-[#333]"><svg viewBox="0 0 6 6" className="mx-auto size-[7px]"><path d="M0 6h6L3 0z" fill="#000" /></svg></div>
        <div className="flex pb-[2px]">
          <span className="ml-[8px] w-[36px]">Add</span>
          <span className="w-[36px]">Edit</span>
          <span className="w-[30px]">Go</span>
          <span className="w-[41px]">View</span>
          <span className="w-[43px]">Tools</span>
          <span className="w-[52px]">Layout</span>
          <span>Help</span>
        </div>
        <div className="ml-auto flex items-center">
          <Tool name="tools" size="size-[18px]" />
          <Tool name="tree" size="size-[16px]" />
          <Tool name="list" size="size-[16px]" />
          <Tool name="colors" className="ml-[16px]" size="size-[18px]" />
          <Tool name="table" className="ml-px" size="size-[18px]" />
          <Tool name="boxes" className="ml-[16px]" size="size-[18px]" />
          <Tool name="note" size="size-[18px]" />
          <Tool name="picture" size="size-[18px]" />
          <Tool name="basket" size="size-[17px]" />
          <Tool name="search" className="ml-[18px]" size="size-[17px]" />
          <Tool name="eyeCard" className="-mr-[2px]" size="size-[17px]" />
        </div>
      </div>
      <NetworkCanvas />
    </div>
  );
}

export default function App() {
  return (
    <div className={`h-[663px] w-[1264px] overflow-hidden bg-[#383838] ${UI}`}>
      <div className="h-[3px] border-b border-black bg-[#3b3b3b]" />
      <div className="flex h-[660px]">
        <SceneView />
        <div className="flex w-[7px] shrink-0 flex-col items-center justify-end gap-[17px] border-l-2 border-black bg-[#474747] pb-[37px]">
          <svg viewBox="0 0 3 5" className="h-[5px] w-[3px]"><path d="M3 0v5L0 2.500z" fill="#999" /></svg>
          <svg viewBox="0 0 5 20" className="h-[20px] w-[5px]"><path d="M.5 0v20M2.500 0v20M4.500 0v20" stroke="#888" strokeDasharray="1 1.500" /></svg>
          <svg viewBox="0 0 3 5" className="h-[5px] w-[3px]"><path d="M0 0v5l3-2.500z" fill="#999" /></svg>
        </div>
        <NetworkEditor />
      </div>
    </div>
  );
}
